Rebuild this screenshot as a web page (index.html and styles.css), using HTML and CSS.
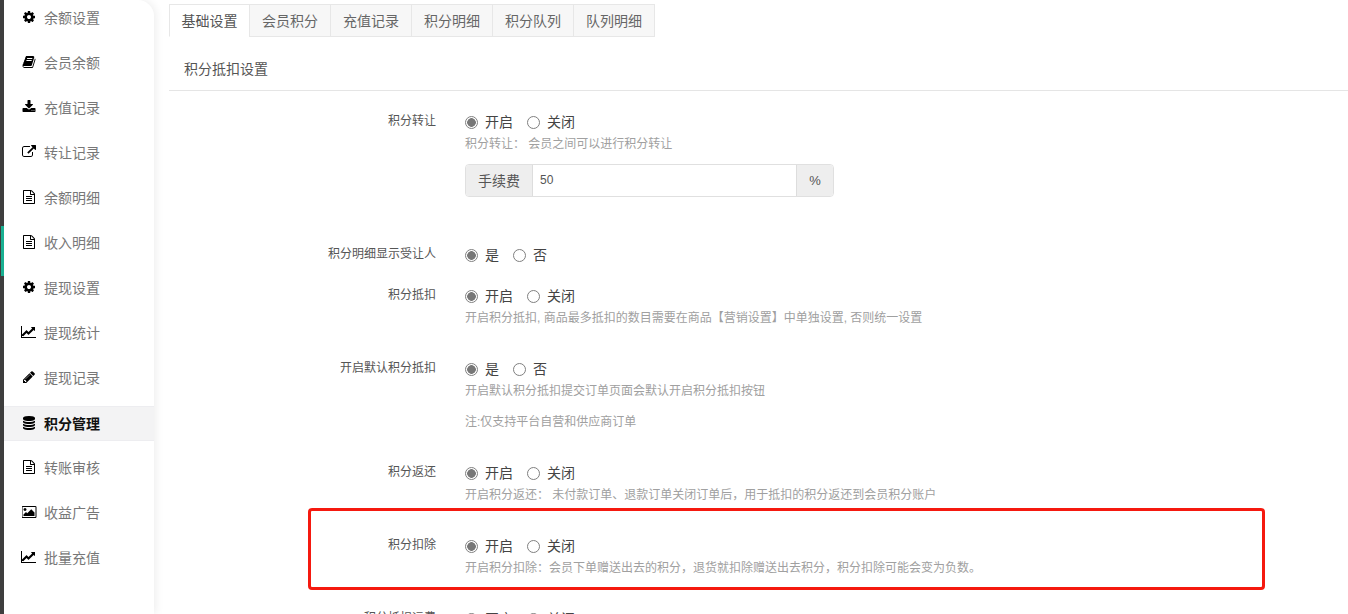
FILE: index.html
```html
<!DOCTYPE html>
<html lang="zh">
<head>
<meta charset="utf-8">
<title>积分管理</title>
<link rel="stylesheet" href="styles.css">
</head>
<body>
<svg class="defs" width="0" height="0">
  <symbol id="i-cog" viewBox="0 0 1792 1792"><path d="M1152 896q0-106-75-181t-181-75-181 75-75 181 75 181 181 75 181-75 75-181zm512-109v222q0 12-8 23t-20 13l-185 28q-19 54-39 91 35 50 107 138 10 12 10 25t-9 23q-27 37-99 108t-94 71q-12 0-26-9l-138-108q-44 23-91 38-16 136-29 186-7 28-36 28h-222q-14 0-24.5-8.5t-11.5-21.5l-28-184q-49-16-90-37l-141 107q-10 9-25 9-14 0-25-11-126-114-165-168-7-10-7-23 0-12 8-23 15-21 51-66.5t54-70.5q-27-50-41-99l-183-27q-13-2-21-12.5t-8-23.5v-222q0-12 8-23t19-13l186-28q14-46 39-92-40-57-107-138-10-12-10-24 0-10 9-23 26-36 98.5-107.5t94.5-71.5q13 0 26 10l138 107q44-23 91-38 16-136 29-186 7-28 36-28h222q14 0 24.5 8.5t11.5 21.5l28 184q49 16 90 37l142-107q9-9 24-9 13 0 25 10 129 119 165 170 7 8 7 22 0 12-8 23-15 21-51 66.5t-54 70.5q26 50 41 98l183 28q13 2 21 12.5t8 23.5z"/></symbol>
  <symbol id="i-book" viewBox="0 0 1792 1792"><path d="M1703 478q40 57 18 129l-275 906q-19 64-76.5 107.5t-122.5 43.5h-923q-77 0-148.5-53.5t-99.5-131.5q-24-67-2-127 0-4 3-27t4-37q1-8-3-21.5t-3-19.5q2-11 8-21t16.5-23.5 16.5-23.5q23-38 45-91.5t30-91.5q3-10 .5-30t-.5-28q3-11 17-28t17-23q21-36 42-92t25-90q1-9-2.5-32t.5-28q4-13 22-30.5t22-22.5q19-26 42.5-84.5t27.5-96.5q1-8-3-25.5t-2-26.5q2-8 9-18t18-23 17-21q8-12 16.5-30.5t15-35 16-36 19.5-32 26.5-23.5 36-11.5 47.5 5.5l-1 3q38-9 51-9h761q74 0 114 56t18 130l-274 906q-36 119-71.5 153.5t-128.5 34.5h-869q-27 0-38 15-11 16-1 43 24 70 144 70h923q29 0 56-15.5t35-41.5l300-987q7-22 5-57 38 15 59 43zm-1064 2q-4 13 2 22.5t20 9.5h608q13 0 25.5-9.5t16.5-22.5l21-64q4-13-2-22.5t-20-9.5h-608q-13 0-25.5 9.5t-16.5 22.5zm-83 256q-4 13 2 22.5t20 9.5h608q13 0 25.5-9.5t16.5-22.5l21-64q4-13-2-22.5t-20-9.5h-608q-13 0-25.5 9.5t-16.5 22.5z"/></symbol>
  <symbol id="i-download" viewBox="0 0 1792 1792"><path d="M1344 1344q0-26-19-45t-45-19-45 19-19 45 19 45 45 19 45-19 19-45zm256 0q0-26-19-45t-45-19-45 19-19 45 19 45 45 19 45-19 19-45zm128-224v320q0 40-28 68t-68 28h-1472q-40 0-68-28t-28-68v-320q0-40 28-68t68-28h465l135 136q58 56 136 56t136-56l136-136h464q40 0 68 28t28 68zm-325-569q17 41-14 70l-448 448q-18 19-45 19t-45-19l-448-448q-31-29-14-70 17-39 59-39h256v-448q0-26 19-45t45-19h256q26 0 45 19t19 45v448h256q42 0 59 39z"/></symbol>
  <symbol id="i-link" viewBox="0 0 1792 1792"><path d="M1408 928v320q0 119-84.5 203.5t-203.5 84.5h-832q-119 0-203.5-84.5t-84.5-203.5v-832q0-119 84.5-203.5t203.5-84.5h704q14 0 23 9t9 23v64q0 14-9 23t-23 9h-704q-66 0-113 47t-47 113v832q0 66 47 113t113 47h832q66 0 113-47t47-113v-320q0-14 9-23t23-9h64q14 0 23 9t9 23zm384-864v512q0 26-19 45t-45 19-45-19l-176-176-652 652q-10 10-23 10t-23-10l-114-114q-10-10-10-23t10-23l652-652-176-176q-19-19-19-45t19-45 45-19h512q26 0 45 19t19 45z"/></symbol>
  <symbol id="i-file" viewBox="0 0 1792 1792"><path d="M1596 380q28 28 48 76t20 88v1152q0 40-28 68t-68 28h-1344q-40 0-68-28t-28-68v-1600q0-40 28-68t68-28h896q40 0 88 20t76 48zm-444-244v376h376q-10-29-22-41l-313-313q-12-12-41-22zm384 1528v-1024h-416q-40 0-68-28t-28-68v-416h-768v1536h1280zm-1024-864q0-14 9-23t23-9h704q14 0 23 9t9 23v64q0 14-9 23t-23 9h-704q-14 0-23-9t-9-23v-64zm736 224q14 0 23 9t9 23v64q0 14-9 23t-23 9h-704q-14 0-23-9t-9-23v-64q0-14 9-23t23-9h704zm0 256q14 0 23 9t9 23v64q0 14-9 23t-23 9h-704q-14 0-23-9t-9-23v-64q0-14 9-23t23-9h704z"/></symbol>
  <symbol id="i-chart" viewBox="0 0 2048 1792"><path d="M1920 1536v128h-1920v-1536h128v1408h1792zm-128-1248v435q0 21-19.5 29.5t-35.5-7.5l-121-121-633 633q-10 10-23 10t-23-10l-233-233-416 416-192-192 585-585q10-10 23-10t23 10l233 233 464-464-121-121q-16-16-7.5-35.5t29.5-19.5h435q14 0 23 9t9 23z"/></symbol>
  <symbol id="i-pencil" viewBox="0 0 1792 1792"><path d="M491 1536l91-91-235-235-91 91v107h128v128h107zm523-928q0-22-22-22-10 0-17 7l-542 542q-7 7-7 17 0 22 22 22 10 0 17-7l542-542q7-7 7-17zm-54-192l416 416-832 832h-416v-416zm683 96q0 53-37 90l-166 166-416-416 166-165q36-38 90-38 53 0 91 38l235 234q37 39 37 91z"/></symbol>
  <symbol id="i-db" viewBox="0 0 1792 1792"><path d="M896 768q237 0 443-43t325-127v170q0 69-103 128t-280 93.5-385 34.5-385-34.5-280-93.5-103-128v-170q119 84 325 127t443 43zm0 768q237 0 443-43t325-127v170q0 69-103 128t-280 93.5-385 34.5-385-34.5-280-93.5-103-128v-170q119 84 325 127t443 43zm0-384q237 0 443-43t325-127v170q0 69-103 128t-280 93.5-385 34.5-385-34.5-280-93.5-103-128v-170q119 84 325 127t443 43zm0-1152q208 0 385 34.5t280 93.5 103 128v128q0 69-103 128t-280 93.5-385 34.5-385-34.5-280-93.5-103-128v-128q0-69 103-128t280-93.5 385-34.5z"/></symbol>
  <symbol id="i-pic" viewBox="0 0 1920 1792"><path d="M576 576q0 80-56 136t-136 56-136-56-56-136 56-136 136-56 136 56 56 136zm1024 384v448h-1408v-192l320-320 160 160 512-512zm96-704h-1600q-13 0-22.5 9.5t-9.5 22.5v1216q0 13 9.5 22.5t22.5 9.5h1600q13 0 22.5-9.5t9.5-22.5v-1216q0-13-9.5-22.5t-22.5-9.5zm160 32v1216q0 66-47 113t-113 47h-1600q-66 0-113-47t-47-113v-1216q0-66 47-113t113-47h1600q66 0 113 47t47 113z"/></symbol>
</svg>
<div class="page">
  <div class="rail"><span class="rail-mark"></span></div>
  <nav class="side">
    <a class="item"><span class="ico"><svg class="i14"><use href="#i-cog"/></svg></span>余额设置</a>
    <a class="item"><span class="ico"><svg class="i14"><use href="#i-book"/></svg></span>会员余额</a>
    <a class="item"><span class="ico"><svg class="i14"><use href="#i-download"/></svg></span>充值记录</a>
    <a class="item"><span class="ico"><svg class="i14"><use href="#i-link"/></svg></span>转让记录</a>
    <a class="item"><span class="ico"><svg class="i14"><use href="#i-file"/></svg></span>余额明细</a>
    <a class="item"><span class="ico"><svg class="i14"><use href="#i-file"/></svg></span>收入明细</a>
    <a class="item"><span class="ico"><svg class="i14"><use href="#i-cog"/></svg></span>提现设置</a>
    <a class="item"><span class="ico"><svg class="i16"><use href="#i-chart"/></svg></span>提现统计</a>
    <a class="item"><span class="ico"><svg class="i14"><use href="#i-pencil"/></svg></span>提现记录</a>
    <a class="item active"><span class="ico"><svg class="i14"><use href="#i-db"/></svg></span>积分管理</a>
    <a class="item"><span class="ico"><svg class="i14"><use href="#i-file"/></svg></span>转账审核</a>
    <a class="item"><span class="ico"><svg class="i15"><use href="#i-pic"/></svg></span>收益广告</a>
    <a class="item"><span class="ico"><svg class="i16"><use href="#i-chart"/></svg></span>批量充值</a>
  </nav>
  <main class="main">
    <div class="tabs">
      <a class="tab on">基础设置</a>
      <a class="tab">会员积分</a>
      <a class="tab">充值记录</a>
      <a class="tab">积分明细</a>
      <a class="tab">积分队列</a>
      <a class="tab">队列明细</a>
    </div>
    <h2 class="title">积分抵扣设置</h2>
    <form class="form">
      <div class="row">
        <div class="lab">积分转让</div>
        <div class="ctl">
          <div class="radios">
            <label class="radio"><input type="radio" name="a" checked>开启</label>
            <label class="radio"><input type="radio" name="a">关闭</label>
          </div>
          <p class="help">积分转让： 会员之间可以进行积分转让</p>
          <div class="group">
            <span class="addon first">手续费</span>
            <input class="field" type="text" value="50">
            <span class="addon last">%</span>
          </div>
        </div>
      </div>
      <div class="row">
        <div class="lab">积分明细显示受让人</div>
        <div class="ctl">
          <div class="radios">
            <label class="radio"><input type="radio" name="b" checked>是</label>
            <label class="radio"><input type="radio" name="b">否</label>
          </div>
        </div>
      </div>
      <div class="row">
        <div class="lab">积分抵扣</div>
        <div class="ctl">
          <div class="radios">
            <label class="radio"><input type="radio" name="c" checked>开启</label>
            <label class="radio"><input type="radio" name="c">关闭</label>
          </div>
          <p class="help">开启积分抵扣, 商品最多抵扣的数目需要在商品【营销设置】中单独设置, 否则统一设置</p>
        </div>
      </div>
      <div class="row">
        <div class="lab">开启默认积分抵扣</div>
        <div class="ctl">
          <div class="radios">
            <label class="radio"><input type="radio" name="d" checked>是</label>
            <label class="radio"><input type="radio" name="d">否</label>
          </div>
          <p class="help">开启默认积分抵扣提交订单页面会默认开启积分抵扣按钮</p>
          <p class="help">注:仅支持平台自营和供应商订单</p>
        </div>
      </div>
      <div class="row">
        <div class="lab">积分返还</div>
        <div class="ctl">
          <div class="radios">
            <label class="radio"><input type="radio" name="e" checked>开启</label>
            <label class="radio"><input type="radio" name="e">关闭</label>
          </div>
          <p class="help">开启积分返还： 未付款订单、退款订单关闭订单后，用于抵扣的积分返还到会员积分账户</p>
        </div>
      </div>
      <div class="row">
        <div class="lab">积分扣除</div>
        <div class="ctl">
          <div class="radios">
            <label class="radio"><input type="radio" name="f" checked>开启</label>
            <label class="radio"><input type="radio" name="f">关闭</label>
          </div>
          <p class="help">开启积分扣除：会员下单赠送出去的积分，退货就扣除赠送出去积分，积分扣除可能会变为负数。</p>
        </div>
      </div>
      <div class="row">
        <div class="lab">积分抵扣运费</div>
        <div class="ctl">
          <div class="radios">
            <label class="radio"><input type="radio" name="g" checked>开启</label>
            <label class="radio"><input type="radio" name="g">关闭</label>
          </div>
        </div>
      </div>
    </form>
    <div class="mark"></div>
  </main>
</div>
</body>
</html>
```
FILE: styles.css
```css
* { box-sizing: border-box; }
html, body { margin: 0; height: 614px; overflow: hidden; background: #fff; }
body { font-family: "Liberation Sans", "Noto Sans CJK SC", sans-serif; font-size: 12px; color: #555; }
.defs { position: absolute; }
.page { display: flex; height: 614px; overflow: hidden; }

.rail { position: relative; flex: 0 0 4px; background: #3f3f3f; }
.rail-mark { position: absolute; left: 1px; top: 226px; width: 3px; height: 50px; background: #1ab394; }

.side { flex: 0 0 150px; display: flex; flex-direction: column; gap: 10px; padding-top: 1px; background: #fff; border-top-right-radius: 16px; box-shadow: 2px 0 8px rgba(0,0,0,.07); z-index: 1; }
.item { display: flex; align-items: center; height: 35px; padding: 0 0 4px 17px; font-size: 14px; color: #777; }
.item .ico { flex: 0 0 16px; margin-right: 7px; display: flex; justify-content: center; color: #000; }
.item.active { padding-bottom: 2px; background: #f3f3f4; color: #111; font-weight: 700; border-top: 1px solid #ededf0; border-bottom: 1px solid #ededf0; }
.i14 { width: 14px; height: 14px; fill: currentColor; }
.i15 { width: 15px; height: 14px; fill: currentColor; }
.i16 { width: 16px; height: 14px; fill: currentColor; }

.main { position: relative; flex: 1; min-width: 0; padding: 4px 0 0 15px; }
.tabs { display: flex; height: 33px; }
.tab { flex: 0 0 82px; margin-left: -1px; text-align: center; line-height: 33px; font-size: 14px; color: #666; background: #f7f7f7; border: 1px solid #e7e7e7; }
.tab:first-child { margin-left: 0; flex-basis: 81px; }
.tab.on { background: #fff; border-bottom-color: #fff; color: #555; }
.title { margin: 0; height: 54px; padding: 21px 0 0 15px; line-height: 22px; font-size: 14px; font-weight: 400; color: #555; border-bottom: 1px solid #e5e5e5; }

.form { padding-top: 21px; }
.row { display: flex; margin-bottom: 21px; }
.lab { flex: 0 0 267px; text-align: right; line-height: 18px; color: #555; }
.ctl { margin-left: 29px; flex: 1; }
.radios { display: flex; gap: 14px; height: 20px; }
.radio { display: flex; align-items: center; gap: 7px; font-size: 14px; line-height: 20px; color: #444; }
.radio input { appearance: none; margin: 0; width: 13px; height: 13px; border: 1px solid #808080; border-radius: 50%; background: #fff; }
.radio input:checked { background: radial-gradient(circle, #777 0 4px, #fff 4.6px); }
.help { margin: 2px 0 10px; line-height: 20px; color: #a0a0a0; }
.help + .help { margin-top: 11px; }

.group { display: flex; width: 369px; height: 33px; margin-top: 10px; margin-bottom: 27px; border: 1px solid #e0e0e0; border-radius: 4px; overflow: hidden; }
.addon { display: flex; align-items: center; justify-content: center; padding-bottom: 1px; background: #eee; font-size: 14px; color: #555; }
.addon.first { flex: 0 0 67px; border-right: 1px solid #ddd; }
.addon.last { flex: 0 0 37px; border-left: 1px solid #ddd; font-size: 13px; }
.field { flex: 1; min-width: 0; border: 0; padding: 0 6px 1px 7px; outline: 0; font: 12px "Liberation Sans", sans-serif; color: #555; }

.mark { position: absolute; left: 154px; top: 508px; width: 957px; height: 82px; border: 3px solid #f5190f; border-radius: 4px; }
```
